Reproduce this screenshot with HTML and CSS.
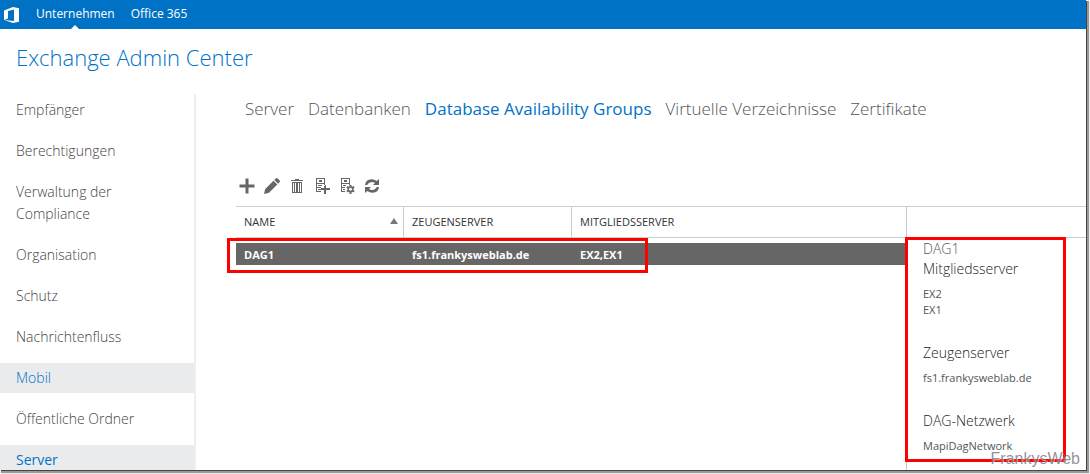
FILE: index.html
```html
<!DOCTYPE html>
<html lang="de">
<head>
<meta charset="utf-8">
<title>Exchange Admin Center</title>
<link rel="stylesheet" href="styles.css">
</head>
<body>
<div class="window">
  <header class="topbar">
    <svg class="logo" viewBox="0 0 18 18" width="18" height="18" aria-label="Office"><path fill="#fff" fill-rule="evenodd" d="M1 4.500 10 1l6 1.200v13.600L10 17 1 14l10 .9V3.500L5 5v7.500L1 14z"/></svg>
    <nav class="suite">
      <a class="suite-link current" href="#">Unternehmen</a>
      <a class="suite-link" href="#">Office 365</a>
    </nav>
  </header>
  <h1 class="title">Exchange Admin Center</h1>
  <div class="columns">
    <nav class="sidebar">
      <a class="side-link" href="#">Empfänger</a>
      <a class="side-link" href="#">Berechtigungen</a>
      <a class="side-link" href="#">Verwaltung der Compliance</a>
      <a class="side-link" href="#">Organisation</a>
      <a class="side-link" href="#">Schutz</a>
      <a class="side-link" href="#">Nachrichtenfluss</a>
      <a class="side-link hover" href="#">Mobil</a>
      <a class="side-link" href="#">Öffentliche Ordner</a>
      <a class="side-link selected" href="#">Server</a>
    </nav>
    <main class="main">
      <nav class="tabs">
        <a class="tab" href="#">Server</a>
        <a class="tab" href="#">Datenbanken</a>
        <a class="tab active" href="#">Database Availability Groups</a>
        <a class="tab" href="#">Virtuelle Verzeichnisse</a>
        <a class="tab" href="#">Zertifikate</a>
      </nav>
      <div class="toolbar">
        <button class="tool" type="button" aria-label="Neu"><svg viewBox="0 0 16 16" width="16" height="16"><path d="M6.500 .5h3v6h6v3h-6v6h-3v-6h-6v-3h6z"/></svg></button>
        <button class="tool" type="button" aria-label="Bearbeiten"><svg viewBox="0 0 16 16" width="16" height="16"><path d="M0 16l1.200-5L9.500 2.700l3.800 3.800L5 14.800zM10.300 1.900l1.400-1.400q1-.9 2 0l1.800 1.800q.9 1 0 2l-1.400 1.400z"/></svg></button>
        <button class="tool" type="button" aria-label="Löschen"><svg viewBox="0 0 16 16" width="16" height="16"><path fill-rule="evenodd" d="M6 1h4v1h4v1H2V2h4zM3 4h10v11H3zM4 5v9h1V5zM6 5v9h1V5zM9 5v9h1V5zM11 5v9h1V5z"/></svg></button>
        <button class="tool" type="button" aria-label="Mitglied hinzufügen"><svg viewBox="0 0 16 16" width="16" height="16"><path fill-rule="evenodd" d="M2 0h9v8h-1V6H3v3h4v1H3v3h4v1H2zM3 1v4h7V1zM5 2h3v2H5zM4 7h4v1H4zM4 11h3v1H4zM10 7h2v3h4v2h-4v4h-2v-4H7v-2h3z"/></svg></button>
        <button class="tool" type="button" aria-label="Netzwerk verwalten"><svg viewBox="0 0 16 16" width="16" height="16"><path fill-rule="evenodd" d="M2 0h9v7h-1V6H3v3h3v1H3v3h3v1H2zM3 1v4h7V1zM5 2h3v2H5zM4 7h3v1H4zM4 11h2v1H4z"/><path fill-rule="evenodd" d="M10.500 7h2v1.300l1 .5 1-.7 1.200 1.600-1.200.9v1.400l1.200.9-1.200 1.600-1-.7-1 .5V16h-2v-1.700l-1-.5-1 .7-1.200-1.600 1.200-.9v-1.400l-1.200-.9L8.500 8.100l1 .7 1-.5zM11.500 9.800a1.500 1.500 0 1 0 .01 0z"/></svg></button>
        <button class="tool" type="button" aria-label="Aktualisieren"><svg viewBox="0 0 16 16" width="16" height="16"><path d="M1 7Q1.500 1.500 7.500 1.200 10.500 1.200 12.700 3L15 1v6H9l2-2Q7.500 2.500 4 5.800L3.200 7zM15 9Q14.500 14.500 8.500 14.800 5.500 14.800 3.300 13L1 15V9h6l-2 2Q8.500 13.500 12 10.200L12.800 9z"/></svg></button>
      </div>
      <div class="panes">
        <div class="list">
          <table class="grid">
            <thead>
              <tr>
                <th class="col-small"><span class="head">NAME<svg viewBox="0 0 8 6" width="8" height="6"><path fill="#777" d="M4 0l4 6H0z"/></svg></span></th>
                <th class="col-small">ZEUGENSERVER</th>
                <th>MITGLIEDSSERVER</th>
              </tr>
            </thead>
            <tbody>
              <tr>
                <td>DAG1</td>
                <td>fs1.frankysweblab.de</td>
                <td>EX2,EX1</td>
              </tr>
            </tbody>
          </table>
          <div class="mark mark-row"></div>
        </div>
        <aside class="details">
          <div class="details-head"></div>
          <div class="details-body">
            <p class="name">DAG1</p>
            <h2 class="label">Mitgliedsserver</h2>
            <p class="value">EX2<br>EX1</p>
            <h2 class="label">Zeugenserver</h2>
            <p class="value">fs1.frankysweblab.de</p>
            <h2 class="label">DAG-Netzwerk</h2>
            <p class="value">MapiDagNetwork</p>
          </div>
          <div class="mark mark-details"></div>
        </aside>
      </div>
    </main>
  </div>
</div>
<div class="watermark">FrankysWeb</div>
</body>
</html>
```
FILE: styles.css
```css
* { box-sizing: border-box; }

body {
  margin: 0;
  height: 100vh;
  padding: 0 4px 4px 0;
  overflow: hidden;
  position: relative;
  background: #fff;
  font-family: "Open Sans", "Noto Sans", sans-serif;
  font-weight: 300;
  color: #444;
}

a { color: inherit; text-decoration: none; }

.window {
  height: 100%;
  display: flex;
  flex-direction: column;
  overflow: hidden;
  background: #fff;
  box-shadow: 1px 1px 0 #444, 2px 2px 1px 1px #999;
}

.topbar {
  flex: none;
  height: 29px;
  display: flex;
  align-items: center;
  padding-left: 3px;
  background: #0072c6;
  color: #fff;
}

.suite {
  display: flex;
  gap: 16px;
  height: 100%;
  margin-left: 15px;
}

.suite-link {
  position: relative;
  font-size: 12px;
  font-weight: 400;
  line-height: 27px;
}

.current::after {
  content: "";
  position: absolute;
  left: 50%;
  bottom: 0;
  margin-left: -4px;
  border: 4px solid transparent;
  border-top: 0;
  border-bottom-color: #fff;
}

.title {
  flex: none;
  margin: 0;
  padding: 13px 16px 22px;
  font-size: 22px;
  line-height: 30px;
  font-weight: 300;
  color: #0072c6;
}

.columns {
  flex: 1;
  min-height: 0;
  display: flex;
}

.sidebar {
  flex: none;
  width: 196px;
  display: flex;
  flex-direction: column;
  gap: 11px;
  padding-top: 1px;
  border-right: 2px solid #eee;
  overflow: hidden;
}

.side-link {
  flex: none;
  padding: 4px 48px 4px 16px;
  font-size: 14px;
  line-height: 22px;
}

.hover { background: #eaebed; color: #0072c6; }

.selected { background: #eaebed; color: #0072c6; font-weight: 400; }

.main {
  flex: 1;
  min-width: 0;
  display: flex;
  flex-direction: column;
  padding-left: 40px;
}

.tabs {
  display: flex;
  gap: 14px;
  padding: 3px 0 0 9px;
  font-size: 17px;
  line-height: 24px;
  white-space: nowrap;
}

.tab { color: #555; }

.active { color: #0072c6; font-weight: 400; }

.toolbar {
  display: flex;
  gap: 9px;
  padding: 57px 0 12px 3px;
}

.tool {
  display: flex;
  padding: 0;
  border: 0;
  background: none;
  fill: #666;
}

.panes {
  flex: 1;
  min-height: 0;
  display: flex;
  border-top: 1px solid #c8d0d4;
}

.list {
  flex: 1;
  min-width: 0;
  position: relative;
}

.grid {
  width: 100%;
  table-layout: fixed;
  border-collapse: separate;
  border-spacing: 0;
}

.col-small { width: 168px; }

.grid th {
  height: 31px;
  padding: 0 5px 2px 8px;
  border-bottom: 1px solid #c8d0d4;
  text-align: left;
  font-size: 11px;
  font-weight: 400;
  color: #333;
}

.grid .col-small { border-right: 1px solid #c8c8c8; }

.head {
  display: flex;
  align-items: center;
  justify-content: space-between;
}

.grid tbody::before {
  content: "";
  display: block;
  height: 5px;
}

.grid td {
  height: 22px;
  padding: 2px 8px 0;
  background: #666;
  color: #fff;
  font-size: 11px;
  font-weight: 700;
  line-height: 16px;
}

.details {
  flex: none;
  width: 180px;
  position: relative;
  border-left: 1px solid #c8c8c8;
}

.details-head {
  height: 31px;
  border-bottom: 1px solid #c8d0d4;
}

.details-body { padding: 1px 16px; }

.name, .label {
  margin: 0;
  font-size: 14px;
  font-weight: 300;
  line-height: 20px;
}

.name { color: #555; }

.label { color: #222; }

.value {
  margin: 7px 0 25px;
  font-size: 11px;
  font-weight: 400;
  line-height: 16px;
  color: #555;
}

.mark {
  position: absolute;
  border: 3px solid #f00;
  pointer-events: none;
}

.mark-row {
  left: -9px;
  top: 31px;
  width: 421px;
  height: 35px;
}

.mark-details {
  left: -2px;
  top: 30px;
  width: 161px;
  height: 225px;
}

.watermark {
  position: absolute;
  right: 10px;
  bottom: 5px;
  font-family: "Liberation Sans", sans-serif;
  font-size: 16px;
  font-weight: 400;
  line-height: 20px;
  color: rgba(110, 110, 120, 0.75);
  text-shadow: 1px 1px 0 rgba(255, 255, 255, 0.6);
}
```
